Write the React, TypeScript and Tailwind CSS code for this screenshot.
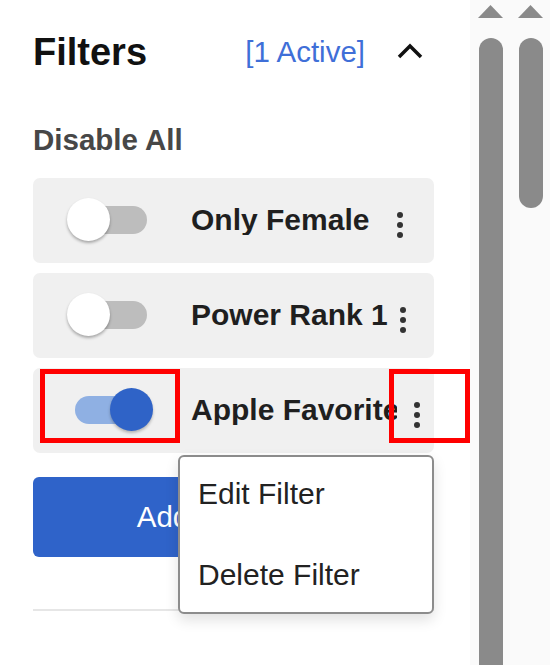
import React from "react"

type FilterRow = {
  name: string
  on: boolean
  dotsOffset: string
}

const rows: FilterRow[] = [
  { name: "Only Female", on: false, dotsOffset: "ml-[0px]" },
  { name: "Power Rank 1", on: false, dotsOffset: "ml-[3px]" },
  { name: "Apple Favorite", on: true, dotsOffset: "ml-[17px]" },
]

function Toggle({ on }: { on: boolean }) {
  return (
    <div className="relative w-[86px] h-[44px] shrink-0">
      <div
        className={
          on
            ? "absolute left-[8px] right-[2px] top-[8px] h-[28px] rounded-full bg-[#8fb0e3]"
            : "absolute left-[5px] right-[6px] top-[8px] h-[28px] rounded-full bg-[#bdbdbd]"
        }
      />
      <div
        className={
          on
            ? "absolute right-0 top-0 w-[43px] h-[43px] rounded-full bg-[#2f63c7] shadow-[0_2px_3px_rgba(0,0,0,0.25)]"
            : "absolute left-0 top-0 w-[43px] h-[43px] rounded-full bg-white shadow-[0_2px_3px_rgba(0,0,0,0.3)]"
        }
      />
    </div>
  )
}

function Kebab() {
  return (
    <div className="flex flex-col gap-[4px] mt-[9px]">
      <div className="w-[6px] h-[6px] rounded-full bg-[#333]" />
      <div className="w-[6px] h-[6px] rounded-full bg-[#333]" />
      <div className="w-[6px] h-[6px] rounded-full bg-[#333]" />
    </div>
  )
}

function ScrollColumn({ thumb }: { thumb: "long" | "short" }) {
  return (
    <div className="w-[25px] flex flex-col items-center pt-[5px]">
      <svg width="25" height="13" viewBox="0 0 25 13">
        <polygon points="0,13 12.5,0 25,13" fill="#8a8a8a" />
      </svg>
      {thumb === "long" ? (
        <div className="mt-[20px] w-[24px] flex-1 rounded-t-full bg-[#8a8a8a]" />
      ) : (
        <div className="mt-[20px] w-[24px] h-[170px] rounded-full bg-[#8a8a8a]" />
      )}
    </div>
  )
}

export default function App() {
  return (
    <div className="flex w-[550px] h-[665px] overflow-hidden bg-white font-['Liberation_Sans',Arial,sans-serif]">
      {/* Filter panel */}
      <div className="relative w-[470px] shrink-0 pl-[33px] pr-[36px]">
        <div className="flex items-center h-[38px] mt-[33px] pr-[11px]">
          <span className="text-[38px] leading-none font-bold text-[#111]">Filters</span>
          <span className="ml-auto text-[29.5px] leading-none text-[#3f6fd8]">[1 Active]</span>
          <svg className="ml-[32px] -mt-[3px]" width="26" height="16" viewBox="0 0 26 16">
            <polyline points="2,14 13,3 24,14" fill="none" stroke="#111" strokeWidth="3.5" />
          </svg>
        </div>

        <div className="mt-[54px] text-[29.5px] leading-none font-bold text-[#474747]">Disable All</div>

        <div className="mt-[23px] flex flex-col gap-[10px]">
          {rows.map((r) => (
            <div key={r.name} className="h-[85px] rounded-[7px] bg-[#f0f0f0] flex items-center pl-[34px]">
              <Toggle on={r.on} />
              <div className="ml-[38px] w-[206px] overflow-hidden whitespace-nowrap text-[30px] leading-none font-bold text-[#1f1f1f]">
                {r.name}
              </div>
              <div className={r.dotsOffset}>
                <Kebab />
              </div>
            </div>
          ))}
        </div>

        <button className="mt-[24px] w-full h-[80px] rounded-[6px] bg-[#2f63c9] text-white text-[29.5px] leading-none">
          Add New Filter
        </button>

        <div className="mt-[52px] h-[2px] bg-[#e6e6e6]" />

        {/* Context menu */}
        <div className="absolute left-[178px] top-[455px] w-[256px] h-[159px] rounded-[6px] border-2 border-[#8c8c8c] bg-white shadow-[0_6px_14px_rgba(0,0,0,0.12)] flex flex-col gap-[51px] pt-[22px] pl-[18px]">
          <div className="text-[30px] leading-none text-[#222]">Edit Filter</div>
          <div className="text-[30px] leading-none text-[#222]">Delete Filter</div>
        </div>

        {/* Annotation boxes */}
        <div className="absolute left-[40px] top-[369px] w-[140px] h-[74px] border-[5px] border-[#ff0000]" />
        <div className="absolute left-[389px] top-[369px] w-[81px] h-[74px] border-[5px] border-[#ff0000]" />
      </div>

      {/* Scrollbars */}
      <div className="flex-1 flex bg-[#fafafa] pl-[8px] gap-[15px]">
        <ScrollColumn thumb="long" />
        <ScrollColumn thumb="short" />
      </div>
    </div>
  )
}
